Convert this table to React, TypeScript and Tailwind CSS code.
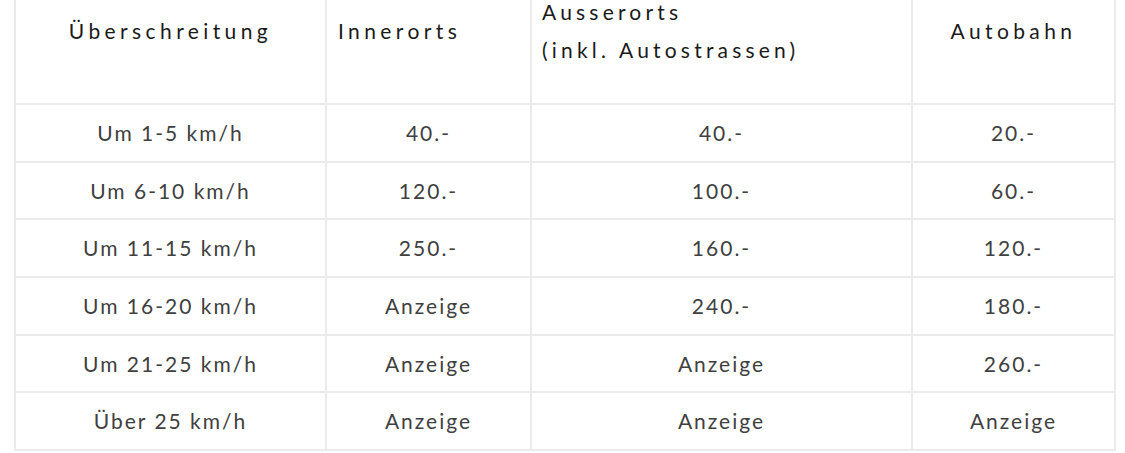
import React from "react";

const rows: string[][] = [
  ["Um 1-5 km/h", "40.-", "40.-", "20.-"],
  ["Um 6-10 km/h", "120.-", "100.-", "60.-"],
  ["Um 11-15 km/h", "250.-", "160.-", "120.-"],
  ["Um 16-20 km/h", "Anzeige", "240.-", "180.-"],
  ["Um 21-25 km/h", "Anzeige", "Anzeige", "260.-"],
  ["Über 25 km/h", "Anzeige", "Anzeige", "Anzeige"],
];

export default function App() {
  return (
    <div className="w-[1125px] h-[453px] bg-white overflow-hidden" style={{ fontFamily: "Lato, 'Open Sans', sans-serif" }}>
      <div className="ml-[14px] w-[1102px] h-[451px] bg-[#ebebeb] px-[2px] pb-[2px] grid grid-cols-[309px_203px_379px_201px] grid-rows-[103px_repeat(6,1fr)] gap-[2px]">
        <div className="bg-white flex items-center justify-center pb-[41px] text-[21px] leading-[38px] tracking-[4.4px] text-[#1a1a1a]">Überschreitung</div>
        <div className="bg-white flex items-center pl-[11px] pb-[41px] text-[21px] leading-[38px] tracking-[4.4px] text-[#1a1a1a]">Innerorts</div>
        <div className="bg-white flex items-center pl-[10px] pb-[41px] text-[21px] leading-[38px] tracking-[4.2px] text-[#1a1a1a]">
          <div>
            Ausserorts
            <br />
            (inkl. Autostrassen)
          </div>
        </div>
        <div className="bg-white flex items-center justify-center pb-[41px] text-[21px] leading-[38px] tracking-[4.4px] text-[#1a1a1a]">Autobahn</div>
        {rows.map((r, i) =>
          r.map((c, j) => (
            <div key={`${i}-${j}`} className="bg-white flex items-center justify-center text-[21px] tracking-[2px] text-[#404040]">
              {c}
            </div>
          ))
        )}
      </div>
    </div>
  );
}
